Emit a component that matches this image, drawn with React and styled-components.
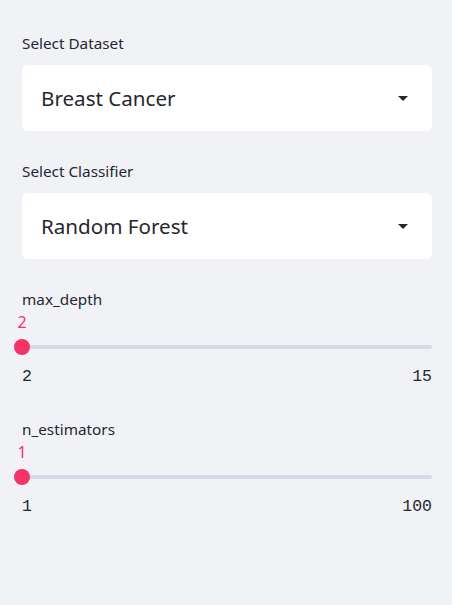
import React from 'react';
import styled, { createGlobalStyle } from 'styled-components';

const GlobalStyle = createGlobalStyle`
  html, body {
    margin: 0;
    padding: 0;
    background: #f0f2f6;
  }
  body {
    font-family: "Noto Sans", "Open Sans", sans-serif;
    color: #262730;
  }
`;

const Sidebar = styled.div`
  width: 452px;
  min-height: 605px;
  box-sizing: border-box;
  padding: 32px 20px 0 22px;
  background: #f0f2f6;
  display: flex;
  flex-direction: column;
`;

const Block = styled.div`
  display: flex;
  flex-direction: column;
  margin-bottom: ${props => props.gap || 0}px;
`;

const Label = styled.div`
  height: 22px;
  line-height: 22px;
  font-size: 15.3px;
  color: #262730;
`;

const SelectBox = styled.div`
  margin-top: 11px;
  height: 66px;
  background: #ffffff;
  border-radius: 6px;
  display: flex;
  align-items: center;
  justify-content: space-between;
  padding: 0 24px 0 19px;
  font-size: 20.6px;
  color: #262730;
`;

const Caret = styled.span`
  width: 0;
  height: 0;
  border-left: 5px solid transparent;
  border-right: 5px solid transparent;
  border-top: 5px solid #262730;
`;

const Value = styled.div`
  height: 22px;
  line-height: 24px;
  font-size: 16px;
  color: #f63366;
  width: 20px;
  margin-left: -10px;
  text-align: center;
`;

const TrackRow = styled.div`
  height: 28px;
  display: flex;
  align-items: center;
  position: relative;
  top: 1px;
`;

const Track = styled.div`
  flex: 1;
  height: 4px;
  border-radius: 2px;
  background: #d5dae5;
`;

const Thumb = styled.div`
  position: absolute;
  left: ${props => props.pos}%;
  top: 50%;
  width: 16px;
  height: 16px;
  margin: -8px 0 0 -8px;
  border-radius: 50%;
  background: #f63366;
`;

const Ticks = styled.div`
  margin-top: 6px;
  height: 22px;
  line-height: 22px;
  display: flex;
  justify-content: space-between;
  font-family: "Liberation Mono", "DejaVu Sans Mono", monospace;
  font-size: 16.5px;
  color: #262730;
`;

function Select({ label, value, gap }) {
  return (
    <Block gap={gap}>
      <Label>{label}</Label>
      <SelectBox>
        <span>{value}</span>
        <Caret />
      </SelectBox>
    </Block>
  );
}

function Slider({ label, value, min, max, gap }) {
  const pos = ((value - min) / (max - min)) * 100;
  return (
    <Block gap={gap}>
      <Label>{label}</Label>
      <Value>{value}</Value>
      <TrackRow>
        <Track />
        <Thumb pos={pos} />
      </TrackRow>
      <Ticks>
        <span>{min}</span>
        <span>{max}</span>
      </Ticks>
    </Block>
  );
}

export default function App() {
  return (
    <>
      <GlobalStyle />
      <Sidebar>
        <Select label="Select Dataset" value="Breast Cancer" gap={29} />
        <Select label="Select Classifier" value="Random Forest" gap={29} />
        <Slider label="max_depth" value={2} min={2} max={15} gap={30} />
        <Slider label="n_estimators" value={1} min={1} max={100} />
      </Sidebar>
    </>
  );
}
